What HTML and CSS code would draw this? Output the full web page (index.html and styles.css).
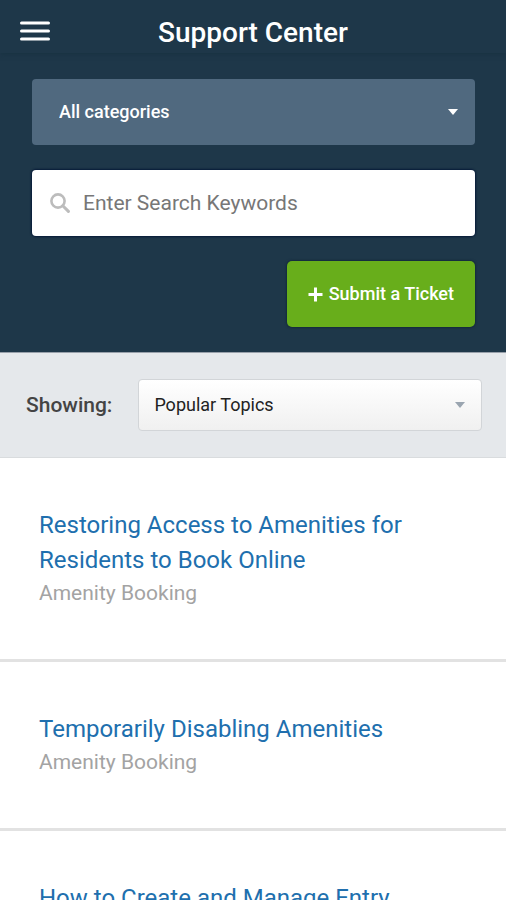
FILE: index.html
```html
<!DOCTYPE html>
<html lang="en">
<head>
<meta charset="utf-8">
<meta name="viewport" content="width=device-width, initial-scale=1">
<title>Support Center</title>
<link rel="stylesheet" href="styles.css">
</head>
<body>
<div class="page">
  <header class="topbar">
    <button class="menu" type="button" aria-label="Menu">
      <svg width="30" height="20" viewBox="0 0 30 20"><path d="M1.5 2H28.5M1.5 10H28.5M1.5 18H28.5" stroke="currentColor" stroke-width="3" stroke-linecap="round"/></svg>
    </button>
    <h1 class="title">Support Center</h1>
  </header>
  <form class="search-panel">
    <div class="select-wrap">
      <select class="select category" aria-label="Category"><option>All categories</option></select>
      <svg class="caret" width="10" height="6" viewBox="0 0 10 6"><path d="M0 0H10L5 6Z" fill="currentColor"/></svg>
    </div>
    <label class="search">
      <svg class="search-icon" width="20" height="20" viewBox="0 0 20 20"><circle cx="8" cy="8" r="6.6" fill="none" stroke="currentColor" stroke-width="2.6"/><path d="M12.8 12.8L18.4 18.4" stroke="currentColor" stroke-width="3" stroke-linecap="round"/></svg>
      <input class="search-input" type="search" placeholder="Enter Search Keywords" aria-label="Search">
    </label>
    <button class="submit" type="button">
      <svg width="15" height="15" viewBox="0 0 15 15"><path d="M7.5 .5V14.5M.5 7.5H14.5" stroke="currentColor" stroke-width="3"/></svg>
      <span>Submit a Ticket</span>
    </button>
  </form>
  <div class="filter">
    <label class="filter-label" for="topics">Showing:</label>
    <div class="select-wrap grow">
      <select class="select topics" id="topics"><option>Popular Topics</option></select>
      <svg class="caret muted" width="10" height="6" viewBox="0 0 10 6"><path d="M0 0H10L5 6Z" fill="currentColor"/></svg>
    </div>
  </div>
  <main class="articles">
    <article class="article">
      <h2 class="article-title"><a href="#">Restoring Access to Amenities for Residents to Book Online</a></h2>
      <p class="article-topic">Amenity Booking</p>
    </article>
    <article class="article">
      <h2 class="article-title"><a href="#">Temporarily Disabling Amenities</a></h2>
      <p class="article-topic">Amenity Booking</p>
    </article>
    <article class="article">
      <h2 class="article-title"><a href="#">How to Create and Manage Entry</a></h2>
    </article>
  </main>
</div>
</body>
</html>
```
FILE: styles.css
```css
* { box-sizing: border-box; }

body {
  margin: 0;
  font-family: Roboto, "Liberation Sans", sans-serif;
  background: #fff;
}

.page {
  display: flex;
  flex-direction: column;
  height: 100vh;
  overflow: hidden;
}

.page > * { flex-shrink: 0; }

h1, h2, p { margin: 0; }

.topbar {
  display: grid;
  grid-template-columns: 30px 1fr 30px;
  align-items: start;
  padding: 13px 20px 0;
  height: 53px;
  background: #1e3749;
  color: #fff;
  box-shadow: 0 1px 5px rgba(20, 45, 60, 0.6);
  z-index: 1;
}

.menu {
  display: flex;
  padding: 8px 0;
  border: 0;
  background: none;
  color: inherit;
}

.title {
  font-size: 28px;
  font-weight: 500;
  line-height: 40px;
  text-align: center;
}

.search-panel {
  display: flex;
  flex-direction: column;
  gap: 25px;
  padding: 26px 31px 25px 32px;
  background: #1e3749;
}

.select-wrap {
  display: flex;
  position: relative;
}

.grow { flex: 1; }

.select {
  width: 100%;
  appearance: none;
  border-radius: 4px;
  font: 500 18px/24px Roboto, "Liberation Sans", sans-serif;
}

.category {
  height: 66px;
  padding: 0 48px 0 27px;
  border: 0;
  background: #50697f;
  color: #fff;
}

.topics {
  height: 52px;
  padding: 0 40px 0 15px;
  border: 1px solid #d2d5d8;
  background: linear-gradient(#fff, #f0f0f0);
  color: #222;
  font-weight: 400;
}

.caret {
  position: absolute;
  right: 17px;
  top: 50%;
  margin-top: -3px;
  color: #fff;
  pointer-events: none;
}

.muted { color: #9aa5b0; }

.search {
  display: flex;
  align-items: center;
  gap: 13px;
  height: 66px;
  padding: 0 18px;
  border-radius: 4px;
  background: #fff;
  box-shadow: 0 0 2px 1px #061a38;
}

.search-icon { color: #bcbcbc; }

.search-input {
  flex: 1;
  min-width: 0;
  padding: 0;
  border: 0;
  outline: 0;
  background: none;
  font: 400 21px/28px Roboto, "Liberation Sans", sans-serif;
}

.search-input::placeholder { color: #777; }

.submit {
  display: flex;
  align-items: center;
  align-self: flex-end;
  gap: 6px;
  height: 66px;
  padding: 0 21px;
  border: 0;
  border-radius: 5px;
  background: #68ae1b;
  color: #fff;
  box-shadow: 0 0 2px 1px #142a3c;
  font: 500 18px/24px Roboto, "Liberation Sans", sans-serif;
}

.filter {
  display: flex;
  align-items: center;
  gap: 26px;
  padding: 26px 24px 26px 26px;
  border-top: 1px solid #98a0aa;
  border-bottom: 1px solid #d9dcde;
  background: #e5e8eb;
}

.filter-label {
  font-size: 21px;
  font-weight: 500;
  line-height: 28px;
  color: #444;
}

.article {
  padding: 50px 39px 51px;
  border-bottom: 3px solid #e2e2e2;
}

.article-title {
  font-size: 24px;
  font-weight: 400;
  line-height: 35px;
}

.article-title a {
  color: #206fae;
  text-decoration: none;
}

.article-topic {
  font-size: 21px;
  line-height: 30px;
  color: #a3a3a3;
}
```
